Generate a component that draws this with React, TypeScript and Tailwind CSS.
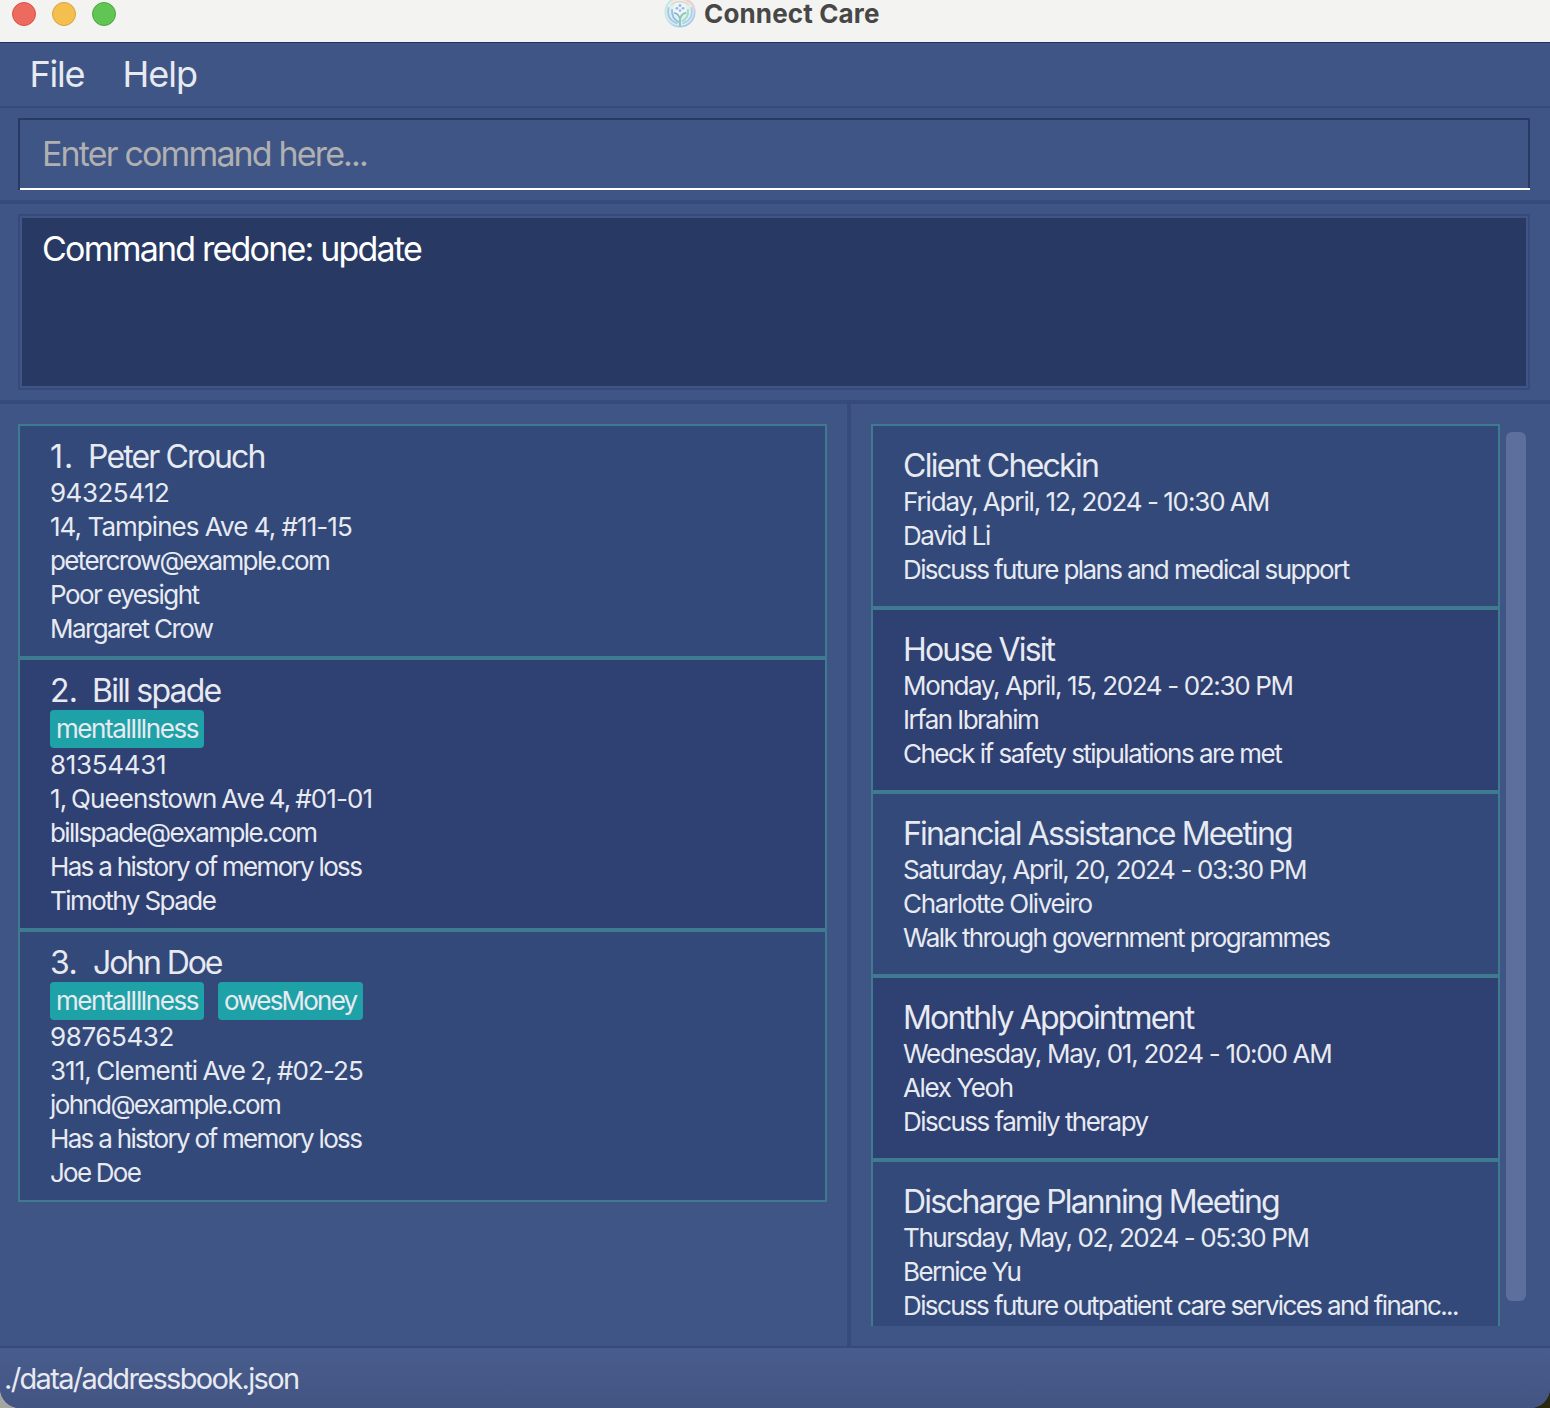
type Text = { text: string; tracking: string };
type Person = {
  index: Text;
  name: Text;
  nameGap: string;
  tags: Text[];
  lines: Text[];
};
type Appointment = { title: Text; lines: Text[] };

const history: Text = { text: "Has a history of memory loss", tracking: "tracking-[-1.69px]" };
const mentalIllness: Text = { text: "mentalIllness", tracking: "tracking-[-1.41px]" };

const people: Person[] = [
  {
    index: { text: "1.", tracking: "tracking-[1px]" },
    name: { text: "Peter Crouch", tracking: "tracking-[-1.87px]" },
    nameGap: "w-[38px]",
    tags: [],
    lines: [
      { text: "94325412", tracking: "tracking-[-0.5px]" },
      { text: "14, Tampines Ave 4, #11-15", tracking: "tracking-[-0.96px]" },
      { text: "petercrow@example.com", tracking: "tracking-[-1.65px]" },
      { text: "Poor eyesight", tracking: "tracking-[-1.54px]" },
      { text: "Margaret Crow", tracking: "tracking-[-1.58px]" },
    ],
  },
  {
    index: { text: "2.", tracking: "tracking-[-0.8px]" },
    name: { text: "Bill spade", tracking: "tracking-[-1.78px]" },
    nameGap: "w-[42px]",
    tags: [mentalIllness],
    lines: [
      { text: "81354431", tracking: "tracking-[-0.31px]" },
      { text: "1, Queenstown Ave 4, #01-01", tracking: "tracking-[-0.93px] [word-spacing:-1.5px]" },
      { text: "billspade@example.com", tracking: "tracking-[-1.59px]" },
      history,
      { text: "Timothy Spade", tracking: "tracking-[-1.55px]" },
    ],
  },
  {
    index: { text: "3.", tracking: "tracking-[-0.55px]" },
    name: { text: "John Doe", tracking: "tracking-[-2.1px]" },
    nameGap: "w-[43px]",
    tags: [mentalIllness, { text: "owesMoney", tracking: "tracking-[-1.8px]" }],
    lines: [
      { text: "98765432", tracking: "tracking-[-0.4px]" },
      { text: "311, Clementi Ave 2, #02-25", tracking: "tracking-[-0.96px] [word-spacing:-1px]" },
      { text: "johnd@example.com", tracking: "tracking-[-1.63px]" },
      history,
      { text: "Joe Doe", tracking: "tracking-[-1.76px]" },
    ],
  },
];

const appointments: Appointment[] = [
  {
    title: { text: "Client Checkin", tracking: "tracking-[-1.73px]" },
    lines: [
      { text: "Friday, April, 12, 2024 - 10:30 AM", tracking: "tracking-[-1.12px] [word-spacing:-0.8px]" },
      { text: "David Li", tracking: "tracking-[-1.4px]" },
      { text: "Discuss future plans and medical support", tracking: "tracking-[-1.6px]" },
    ],
  },
  {
    title: { text: "House Visit", tracking: "tracking-[-1.83px]" },
    lines: [
      { text: "Monday, April, 15, 2024 - 02:30 PM", tracking: "tracking-[-1.35px]" },
      { text: "Irfan Ibrahim", tracking: "tracking-[-1.56px]" },
      { text: "Check if safety stipulations are met", tracking: "tracking-[-1.52px]" },
    ],
  },
  {
    title: { text: "Financial Assistance Meeting", tracking: "tracking-[-1.83px]" },
    lines: [
      { text: "Saturday, April, 20, 2024 - 03:30 PM", tracking: "tracking-[-1.35px]" },
      { text: "Charlotte Oliveiro", tracking: "tracking-[-1.33px]" },
      { text: "Walk through government programmes", tracking: "tracking-[-1.58px]" },
    ],
  },
  {
    title: { text: "Monthly Appointment", tracking: "tracking-[-1.82px]" },
    lines: [
      { text: "Wednesday, May, 01, 2024 - 10:00 AM", tracking: "tracking-[-1.27px]" },
      { text: "Alex Yeoh", tracking: "tracking-[-1.36px]" },
      { text: "Discuss family therapy", tracking: "tracking-[-1.54px]" },
    ],
  },
  {
    title: { text: "Discharge Planning Meeting", tracking: "tracking-[-1.85px]" },
    lines: [
      { text: "Thursday, May, 02, 2024 - 05:30 PM", tracking: "tracking-[-1.4px]" },
      { text: "Bernice Yu", tracking: "tracking-[-1.61px]" },
      { text: "Discuss future outpatient care services and financ...", tracking: "tracking-[-1.61px]" },
    ],
  },
];

function Line({ line }: { line: Text }) {
  return <div className={`h-[34px] text-[26px] leading-[34px] ${line.tracking}`}>{line.text}</div>;
}

function PersonCard({ person, alternate }: { person: Person; alternate: boolean }) {
  return (
    <div
      className={`border-2 border-[#3e7b91] py-[10px] pl-[30px] ${alternate ? "bg-[#2f4072]" : "bg-[#32497a]"}`}
    >
      <div className="flex h-10 text-[32px] leading-[42px]">
        <span className={`${person.nameGap} ${person.index.tracking}`}>{person.index.text}</span>
        <span className={person.name.tracking}>{person.name.text}</span>
      </div>
      {person.tags.length > 0 && (
        <div className="flex h-[38px] gap-[14px]">
          {person.tags.map((tag) => (
            <span
              key={tag.text}
              className={`h-[38px] rounded-[4px] bg-[#1fa2a7] text-[26px] leading-[38px] ${tag.tracking} ${
                tag.text === "owesMoney" ? "w-[145px] pl-[6px]" : "w-[154px] pl-[6px]"
              }`}
            >
              {tag.text}
            </span>
          ))}
        </div>
      )}
      {person.lines.map((line) => (
        <Line key={line.text} line={line} />
      ))}
    </div>
  );
}

function AppointmentCard({ item, alternate }: { item: Appointment; alternate: boolean }) {
  return (
    <div
      className={`h-[184px] shrink-0 border-2 border-[#3e7b91] pt-[19px] pl-[30px] ${
        alternate ? "bg-[#2f4072]" : "bg-[#32497a]"
      }`}
    >
      <div className={`h-10 text-[32px] leading-[42px] ${item.title.tracking}`}>{item.title.text}</div>
      {item.lines.map((line) => (
        <Line key={line.text} line={line} />
      ))}
    </div>
  );
}

function Logo() {
  return (
    <svg width="32" height="28" viewBox="0 0 32 28" fill="none" strokeLinecap="round">
      <defs>
        <linearGradient id="ring" x1="4" y1="2" x2="24" y2="26" gradientUnits="userSpaceOnUse">
          <stop offset="0" stopColor="#bfe9dc" />
          <stop offset="0.4" stopColor="#cfe6e6" />
          <stop offset="0.7" stopColor="#b4d2f0" />
          <stop offset="1" stopColor="#a9c6ec" />
        </linearGradient>
      </defs>
      <circle cx="16" cy="12" r="15.300" fill="#e2eff0" />
      <circle cx="16" cy="12" r="14.600" stroke="url(#ring)" strokeWidth="1.800" />
      <path d="M9 -.500C18 -4 28 1 30.300 9" stroke="#f3cfc4" strokeWidth="1.800" />
      <path d="M4.500 8C3 15.500 6.500 21 13 23.500" stroke="#a3c8ec" strokeWidth="1.800" />
      <path d="M27.500 8C29 15.500 25.500 21 19 23.500" stroke="#a9d3ea" strokeWidth="1.800" />
      <path d="M7.500 5C10 .500 22 .500 24.500 5" stroke="#efd2ca" strokeWidth="1.500" />
      <path d="M8 10C7.500 16 10 19.500 14.500 22" stroke="#8fbfe4" strokeWidth="1.800" />
      <path d="M24 10C24.500 16 22.500 18.500 18.500 21" stroke="#a5dcc6" strokeWidth="2" />
      <path d="M9.500 9.500C10 4 12.500 3 16 3S22 4 22.500 9.500C22 13 18 13.500 16 17C14 13.500 10 13 9.500 9.500Z" fill="#f0f6f7" />
      <path d="M10.500 13C13.500 13.500 15 15.500 15.800 18.500" stroke="#84a9bf" strokeWidth="1.300" />
      <path d="M21.500 13C18.500 13.500 17 15.500 16.200 18.500C15.800 21 16 23.500 16 26" stroke="#8cc9b9" strokeWidth="2" />
      <g fill="#8fbbe8">
        <circle cx="16" cy="5.400" r="1.500" />
        <circle cx="12.900" cy="8.300" r="1.400" />
        <circle cx="19.100" cy="8.300" r="1.400" />
        <circle cx="16" cy="10.600" r="1.300" />
      </g>
    </svg>
  );
}

export default function App() {
  return (
    <div className="h-[1408px] w-[1550px] overflow-hidden bg-[linear-gradient(90deg,#a5a5a3_50%,#2b2810_50%)] font-['Inter',sans-serif]">
      <div className="flex h-full flex-col overflow-hidden rounded-b-[20px] bg-[#3f5585] text-[#e8eaf1]">
        <header className="relative flex h-[42px] shrink-0 bg-[#f3f3f1]">
          <div className="flex gap-4 pt-[2px] pl-3">
            <span className="size-6 rounded-full border border-[#d9534b] bg-[#ed6a5e]" />
            <span className="size-6 rounded-full border border-[#d9a13e] bg-[#f5bf4f]" />
            <span className="size-6 rounded-full border border-[#4fa73f] bg-[#61c554]" />
          </div>
          <div className="absolute top-0 left-[664px] flex">
            <Logo />
            <span className="ml-2 h-[27px] text-[26px] leading-[27px] font-bold tracking-[0.15px] text-[#474747]">
              Connect Care
            </span>
          </div>
        </header>

        <nav className="flex h-[66px] shrink-0 border-t border-b-2 border-t-[#1f3261] border-b-[#364b7c] pl-[29.5px] text-[36px] leading-[63px]">
          <span className="w-[93px] tracking-[-1.2px]">File</span>
          <span className="tracking-[-1px]">Help</span>
        </nav>

        <div className="h-[92px] shrink-0 px-[18px] pt-[10px]">
          <div className="h-[72px] w-[1512px] border-l-2 border-[#283963]">
            <div className="h-full border-b-2 border-white">
              <div className="h-full border-t-2 border-r-2 border-[#283963] pl-[22px] text-[34px] leading-[68px] tracking-[-1.85px] text-[#b0b0b2]">
                Enter command here...
              </div>
            </div>
          </div>
        </div>
        <div className="h-1 shrink-0 bg-[#364b7c]" />

        <div className="h-[196px] shrink-0 px-[18px] pt-[10px]">
          <div className="h-[176px] w-[1512px] border-2 border-[#364b7c] p-[2px]">
            <div className="h-[168px] w-[1504px] bg-[#283963] pl-5 text-[34px] leading-[62px] tracking-[-1.79px] text-white">
              Command redone: update
            </div>
          </div>
        </div>
        <div className="h-1 shrink-0 bg-[#364b7c]" />

        <main className="flex h-[942px] shrink-0">
          <section className="w-[847px] pt-5 pr-5 pl-[18px]">
            {people.map((person, i) => (
              <PersonCard key={person.name.text} person={person} alternate={i % 2 === 1} />
            ))}
          </section>
          <div className="w-1 shrink-0 bg-[#364b7c]" />
          <section className="flex pt-5 pl-5">
            <div className="flex h-[902px] w-[629px] flex-col overflow-hidden">
              {appointments.map((item, i) => (
                <AppointmentCard key={item.title.text} item={item} alternate={i % 2 === 1} />
              ))}
            </div>
            <div className="mt-2 ml-[6px] h-[869px] w-5 rounded-[6px] bg-[#5d709d]" />
          </section>
        </main>

        <footer className="h-[62px] shrink-0 border-t-2 border-[#364b7c] bg-linear-to-b from-[#485d8e] to-[#435482] pl-1 text-[29px] leading-[61px] tracking-[-1.66px]">
          ./data/addressbook.json
        </footer>
      </div>
    </div>
  );
}
